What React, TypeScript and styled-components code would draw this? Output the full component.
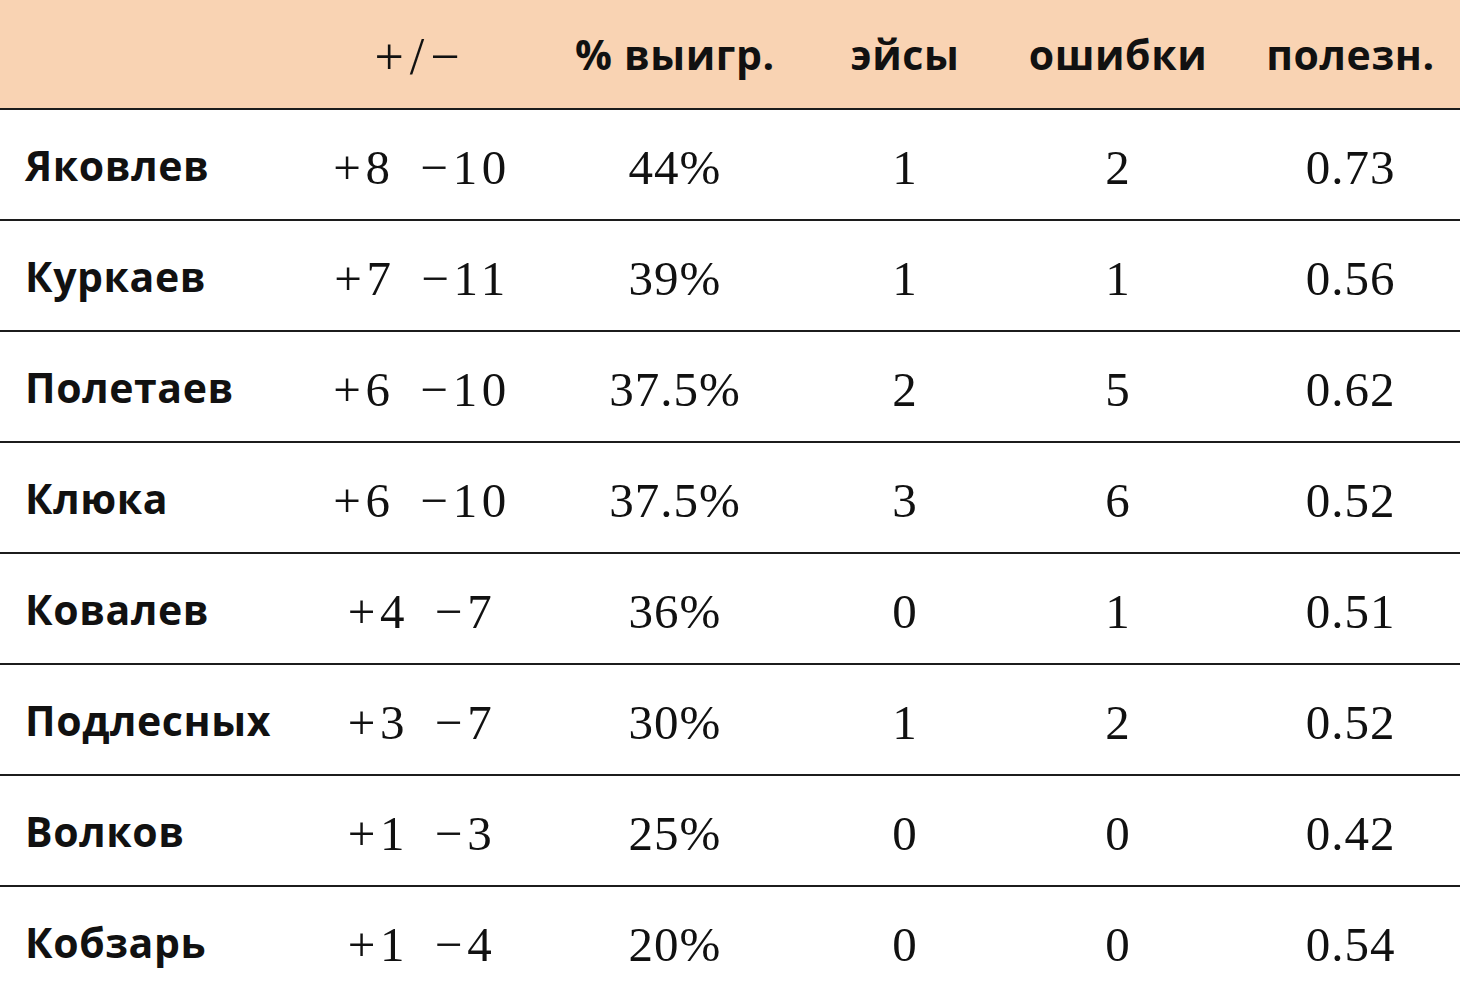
import styled, { createGlobalStyle } from "styled-components";

const GlobalStyle = createGlobalStyle`
  html, body {
    margin: 0;
    padding: 0;
    background: #ffffff;
    overflow: hidden;
  }
`;

const COLUMNS = "305px 230px 280px 180px 246px 219px";

const Table = styled.div`
  width: 1460px;
  height: 992px;
  overflow: hidden;
  background-color: #ffffff;
`;

const HeaderRow = styled.div`
  display: grid;
  grid-template-columns: ${COLUMNS};
  align-items: center;
  height: 108px;
  background-color: #f9d3b3;
  border-bottom: 2px solid #1c1c1c;
`;

const HeaderCell = styled.div<{ serif?: boolean }>`
  text-align: center;
  font-family: ${(props) =>
    props.serif ? '"Liberation Serif", serif' : '"Open Sans", sans-serif'};
  font-weight: ${(props) => (props.serif ? 400 : 700)};
  font-size: ${(props) => (props.serif ? "52px" : "41px")};
  letter-spacing: ${(props) => (props.serif ? "6px" : "0.6px")};
  color: #111;
  padding-top: ${(props) => (props.serif ? "4px" : "0")};
`;

const Row = styled.div`
  display: grid;
  grid-template-columns: ${COLUMNS};
  align-items: center;
  height: 109px;
  border-bottom: 2px solid #1c1c1c;
`;

const Name = styled.div`
  padding-left: 25px;
  font-family: "Open Sans", sans-serif;
  font-weight: 700;
  font-size: 41px;
  letter-spacing: 0.6px;
  color: #111;
`;

const Num = styled.div`
  text-align: center;
  padding-top: 6px;
  font-family: "Liberation Serif", serif;
  font-size: 49px;
  letter-spacing: 1px;
  color: #111;
`;

const Score = styled(Num)`
  display: flex;
  justify-content: center;
  gap: 26px;
  letter-spacing: 4.5px;
  padding-left: 4px;
`;

type Player = {
  name: string;
  plus: number;
  minus: number;
  win: string;
  aces: number;
  errors: number;
  eff: string;
};

const players: Player[] = [
  { name: "Яковлев", plus: 8, minus: 10, win: "44%", aces: 1, errors: 2, eff: "0.73" },
  { name: "Куркаев", plus: 7, minus: 11, win: "39%", aces: 1, errors: 1, eff: "0.56" },
  { name: "Полетаев", plus: 6, minus: 10, win: "37.5%", aces: 2, errors: 5, eff: "0.62" },
  { name: "Клюка", plus: 6, minus: 10, win: "37.5%", aces: 3, errors: 6, eff: "0.52" },
  { name: "Ковалев", plus: 4, minus: 7, win: "36%", aces: 0, errors: 1, eff: "0.51" },
  { name: "Подлесных", plus: 3, minus: 7, win: "30%", aces: 1, errors: 2, eff: "0.52" },
  { name: "Волков", plus: 1, minus: 3, win: "25%", aces: 0, errors: 0, eff: "0.42" },
  { name: "Кобзарь", plus: 1, minus: 4, win: "20%", aces: 0, errors: 0, eff: "0.54" },
];

function App() {
  return (
    <>
      <GlobalStyle />
      <Table>
        <HeaderRow>
          <HeaderCell />
          <HeaderCell serif>+/−</HeaderCell>
          <HeaderCell>% выигр.</HeaderCell>
          <HeaderCell>эйсы</HeaderCell>
          <HeaderCell>ошибки</HeaderCell>
          <HeaderCell>полезн.</HeaderCell>
        </HeaderRow>
        {players.map((p) => (
          <Row key={p.name}>
            <Name>{p.name}</Name>
            <Score>
              <span>+{p.plus}</span>
              <span>−{p.minus}</span>
            </Score>
            <Num>{p.win}</Num>
            <Num>{p.aces}</Num>
            <Num>{p.errors}</Num>
            <Num>{p.eff}</Num>
          </Row>
        ))}
      </Table>
    </>
  );
}

export default App;
